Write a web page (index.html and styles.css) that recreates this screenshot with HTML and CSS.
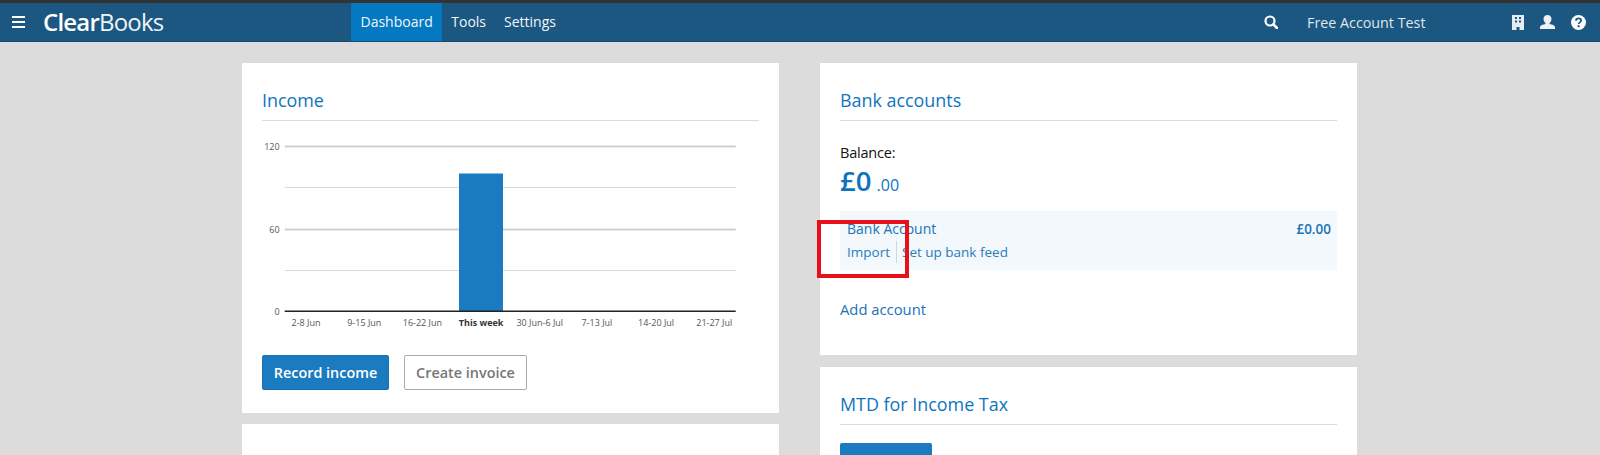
FILE: index.html
```html
<!DOCTYPE html>
<html lang="en">
<head>
<meta charset="utf-8">
<title>Clear Books Dashboard</title>
<link rel="stylesheet" href="styles.css">
</head>
<body>
<header class="topbar">
  <div class="brand">
    <svg class="burger" viewBox="0 0 13 12" width="13" height="12"><path d="M0 0h13v2H0zM0 5h13v2H0zM0 10h13v2H0z" fill="#fff"/></svg>
    <span class="logo"><b>Clear</b>Books</span>
  </div>
  <nav class="nav">
    <a class="nav-item active">Dashboard</a>
    <a class="nav-item">Tools</a>
    <a class="nav-item">Settings</a>
  </nav>
  <div class="right">
    <svg class="search" viewBox="0 0 14 14" width="14" height="14"><circle cx="6" cy="6" r="4.500" fill="none" stroke="#fff" stroke-width="2.200"/><path d="M9.400 9.400L13 13" stroke="#fff" stroke-width="2.600" stroke-linecap="round"/></svg>
    <span class="account">Free Account Test</span>
    <div class="icons">
      <svg viewBox="0 0 12 15" width="12" height="15"><path fill-rule="evenodd" fill="#e6edf2" d="M0 0h12v15H7.500v-3h-3v3H0zM3 2v2h2V2zM7 2v2h2V2zM3 5.500v2h2v-2zM7 5.500v2h2v-2z"/></svg>
      <svg viewBox="0 0 15 14" width="15" height="14"><path fill="#eef2f5" d="M7.500 0c2.600 0 4 1.800 4 4.100 0 1.600-.8 3.100-1.900 3.900v1.100c2.400.5 5.400 1.200 5.400 3.100V14H0v-1.800c0-1.900 3-2.600 5.400-3.100V8C4.300 7.200 3.500 5.700 3.500 4.100 3.500 1.800 4.900 0 7.500 0z"/></svg>
      <svg viewBox="0 0 15 15" width="15" height="15"><circle cx="7.500" cy="7.500" r="7.500" fill="#fff"/><path d="M5 5.800c0-1.500 1.100-2.400 2.600-2.400s2.500.9 2.500 2.100c0 1.800-2.500 1.900-2.500 3.600" fill="none" stroke="#1b5781" stroke-width="1.800"/><rect x="6.600" y="10.200" width="2" height="2" fill="#1b5781"/></svg>
    </div>
  </div>
</header>
<main class="page">
  <div class="col">
    <section class="card income">
      <h2 class="card-title">Income</h2>
      <svg class="chart" viewBox="0 0 497 206" width="497" height="206">
        <g class="grid-strong"><path d="M22.700 25.500H473.700M22.700 108.500H473.700"/></g>
        <g class="grid-light"><path d="M22.700 66.500H473.700M22.700 149.500H473.700"/></g>
        <rect x="197" y="52.500" width="44" height="137.500" fill="#1b7bc1"/>
        <path d="M22.700 190.200H473.700" stroke="#222" stroke-width="1.500"/>
        <g class="ylabel">
          <text x="17.600" y="28.500">120</text>
          <text x="17.600" y="111.500">60</text>
          <text x="17.600" y="193.500">0</text>
        </g>
        <g class="xlabel">
          <text x="44" y="205">2-8 Jun</text>
          <text x="102.300" y="205">9-15 Jun</text>
          <text x="160.400" y="205">16-22 Jun</text>
          <text x="219.100" y="205" class="current">This week</text>
          <text x="277.800" y="205">30 Jun-6 Jul</text>
          <text x="334.900" y="205">7-13 Jul</text>
          <text x="394.100" y="205">14-20 Jul</text>
          <text x="452.300" y="205">21-27 Jul</text>
        </g>
      </svg>
      <div class="actions">
        <a class="btn primary">Record income</a>
        <a class="btn secondary">Create invoice</a>
      </div>
    </section>
    <section class="card stub"></section>
  </div>
  <div class="col">
    <section class="card bank">
      <h2 class="card-title">Bank accounts</h2>
      <p class="balance-label">Balance:</p>
      <p class="balance"><span class="pounds">£0</span> <span class="pence">.00</span></p>
      <div class="account-row">
        <div class="account-line"><a>Bank Account</a><a class="amount">£0.00</a></div>
        <div class="account-links"><a class="import">Import</a><a>Set up bank feed</a></div>
        <div class="highlight"></div>
      </div>
      <a class="add">Add account</a>
    </section>
    <section class="card mtd">
      <h2 class="card-title">MTD for Income Tax</h2>
      <div class="mtd-btn"></div>
    </section>
  </div>
</main>
</body>
</html>
```
FILE: styles.css
```css
* { box-sizing: border-box; }
html, body { margin: 0; height: 455px; overflow: hidden; }
body { background: #dcdcdc; font-family: "Open Sans", sans-serif; color: #111; }
a { display: block; }

.topbar {
  height: 42px;
  background: #1b5781;
  border-top: 3px solid #333;
  border-bottom: 1px solid #124a73;
  display: flex;
  color: #fff;
}
.brand { width: 351px; display: flex; align-items: center; padding-left: 12px; }
.burger { margin-right: 18px; }
.logo { font-size: 24px; font-weight: 400; letter-spacing: -0.8px; color: #eef3f6; line-height: 1; }
.logo b { font-weight: 600; color: #fff; }
.nav { display: flex; font-size: 14px; }
.nav-item { padding: 0 9px; line-height: 38px; color: #f2f6f9; }
.nav-item.active { background: #0479c1; padding: 0 9.500px; }
.right { margin-left: auto; display: flex; align-items: center; padding-right: 14px; }
.search { margin-right: 29px; }
.account { width: 205px; font-size: 14.300px; color: #dfe8ef; }
.icons { display: flex; align-items: center; gap: 16px; }

.page { display: flex; gap: 41px; padding: 21px 0 0 242px; }
.col { width: 537px; display: flex; flex-direction: column; gap: 11px; flex: none; }
.card { background: #fff; padding: 0 20px; }
.income { height: 350px; }
.bank { height: 292px; margin-bottom: 1px; }
.stub, .mtd { height: 100px; }
.card-title {
  margin: 0;
  height: 58px;
  padding-top: 26px;
  border-bottom: 1px solid #dcdcdc;
  font-size: 17.900px;
  line-height: 23px;
  font-weight: 500;
  color: #0e74bd;
}
.chart { display: block; overflow: visible; }
.grid-strong path { stroke: #cfcfcf; stroke-width: 2; fill: none; }
.grid-light path { stroke: #d8d8d8; stroke-width: 1; fill: none; }
.ylabel text { font-size: 9px; fill: #555; text-anchor: end; }
.xlabel text { font-size: 9px; fill: #555; text-anchor: middle; }
.xlabel .current { font-weight: 700; fill: #333; }

.actions { display: flex; gap: 15px; margin-top: 28px; }
.btn { height: 35px; line-height: 33px; font-size: 14.400px; font-weight: 600; text-align: center; border-radius: 2px; border: 1px solid; }
.primary { width: 127px; background: #1b7bc1; border-color: #1a71b2; color: #fff; }
.secondary { width: 123px; background: #fff; border-color: #aaa; color: #777; }

.balance-label { margin: 22px 0 0; font-size: 14.500px; line-height: 20px; color: #111; letter-spacing: -0.2px; }
.balance { margin: 0; color: #0e74bd; line-height: 36px; height: 36px; }
.pounds { font-size: 27.500px; font-weight: 600; }
.pence { font-size: 16px; margin-left: 1px; }
.account-row {
  position: relative;
  margin-top: 12px;
  height: 59px;
  background: #f2f8fc;
  padding: 8px 6px 0 7px;
  font-size: 13.500px;
  color: #2b7cb9;
}
.account-line { display: flex; justify-content: space-between; line-height: 20px; font-weight: 500; font-size: 14px; color: #1b73b6; }
.amount { font-size: 13.500px; font-weight: 600; }
.account-links { display: flex; margin-top: 2px; line-height: 22px; }
.import { padding-right: 6px; border-right: 1px solid #d5d5d5; margin-right: 5px; }
.highlight {
  position: absolute;
  left: -23px;
  top: 9px;
  width: 92px;
  height: 58px;
  border: 4px solid #e8101a;
}
.add { margin-top: 29px; font-size: 14.800px; line-height: 20px; font-weight: 500; color: #1b73b6; }
.mtd-btn { width: 92px; height: 40px; margin-top: 18px; background: #1b7bc1; border-radius: 2px 2px 0 0; }
```
